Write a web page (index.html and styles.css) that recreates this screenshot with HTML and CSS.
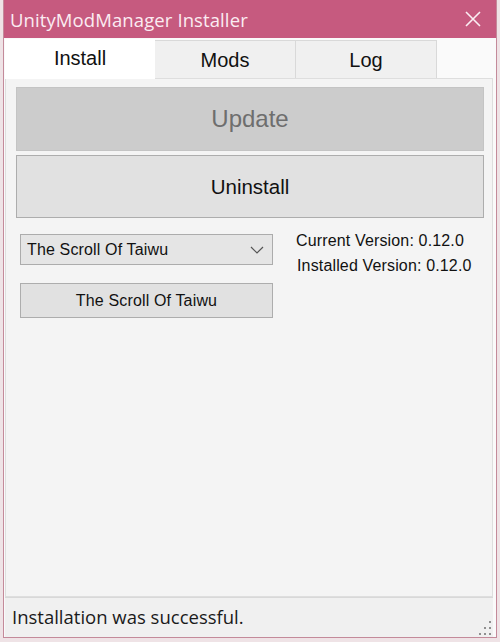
FILE: index.html
```html
<!DOCTYPE html>
<html>
<head>
<meta charset="utf-8">
<link rel="stylesheet" href="styles.css">
</head>
<body>
<div class="window">
  <div class="titlebar">
    <span class="title">UnityModManager Installer</span>
    <svg class="close" width="16" height="16" viewBox="0 0 16 16"><path d="M1 1L15 15M15 1L1 15" stroke="#fbeef3" stroke-width="1.6" fill="none"/></svg>
  </div>
  <div class="client">
    <div class="tabs">
      <div class="tab active">Install</div>
      <div class="tab">Mods</div>
      <div class="tab">Log</div>
    </div>
    <div class="page">
      <div class="bigbtn update">Update</div>
      <div class="bigbtn uninstall">Uninstall</div>
      <div class="row">
        <div class="leftcol">
          <div class="combo">
            <span>The Scroll Of Taiwu</span>
            <svg width="14" height="8" viewBox="0 0 14 8"><path d="M1 1L7 7L13 1" stroke="#555" stroke-width="1.2" fill="none"/></svg>
          </div>
          <div class="smallbtn">The Scroll Of Taiwu</div>
        </div>
        <div class="versions">
          <div>Current Version: 0.12.0</div>
          <div class="inst">Installed Version: 0.12.0</div>
        </div>
      </div>
    </div>
    <div class="status">
      <span>Installation was successful.</span>
      <div class="grip">
        <i class="d1"></i><i class="d2"></i><i class="d3"></i><i class="d4"></i><i class="d5"></i><i class="d6"></i>
      </div>
    </div>
  </div>
</div>
</body>
</html>
```
FILE: styles.css
```css
html, body {
  margin: 0;
  padding: 0;
}
body {
  background: #efe3e6;
  width: 500px;
  height: 642px;
  overflow: hidden;
}
.window {
  margin-left: 3px;
  width: 492px;
  height: 637px;
  border: 1px solid #c48a9a;
  border-top: none;
  display: flex;
  flex-direction: column;
  background: #fafafa;
}
.titlebar {
  height: 38px;
  background: #c65a7f;
  display: flex;
  align-items: center;
  justify-content: space-between;
  padding: 0 15px 0 6px;
  flex-shrink: 0;
}
.title {
  font-family: "Open Sans", "Noto Sans", sans-serif;
  font-size: 18.5px;
  color: #fbecf2;
  letter-spacing: 0.1px;
}
.close {
  display: block;
}
.client {
  flex: 1;
  display: flex;
  flex-direction: column;
  padding: 2px 3px 0 1px;
}
.tabs {
  display: flex;
  height: 38px;
  align-items: flex-end;
  position: relative;
  z-index: 1;
}
.tab {
  font-family: "Liberation Sans", Arial, sans-serif;
  font-size: 20px;
  color: #111;
  width: 141px;
  height: 38px;
  box-sizing: border-box;
  background: #f0f0f0;
  border: 1px solid #d9d9d9;
  border-bottom: none;
  border-left: none;
  display: flex;
  align-items: center;
  justify-content: center;
  padding-top: 2px;
}
.tab.active {
  width: 150px;
  height: 40px;
  background: #ffffff;
  border: none;
  margin-bottom: -1px;
  padding-bottom: 4px;
}
.page {
  height: 519px;
  background: #f4f4f4;
  border: 1px solid #dedede;
  box-sizing: border-box;
  padding: 8px 8px 0 10px;
  display: flex;
  flex-direction: column;
}
.bigbtn {
  font-family: "Liberation Sans", Arial, sans-serif;
  display: flex;
  align-items: center;
  justify-content: center;
  box-sizing: border-box;
}
.update {
  height: 64px;
  background: #cccccc;
  border: 1px solid #c4c4c4;
  color: #6e6e6e;
  font-size: 24px;
}
.uninstall {
  height: 63px;
  margin-top: 4px;
  background: #e1e1e1;
  border: 1px solid #adadad;
  color: #111;
  font-size: 20.5px;
}
.row {
  display: flex;
  margin-top: 10px;
}
.leftcol {
  margin-left: 4px;
  width: 253px;
  padding-top: 6px;
  display: flex;
  flex-direction: column;
}
.combo {
  height: 31px;
  box-sizing: border-box;
  background: #e5e5e5;
  border: 1px solid #acacac;
  display: flex;
  align-items: center;
  justify-content: space-between;
  padding: 0 8px 0 6px;
  font-family: "Liberation Sans", Arial, sans-serif;
  font-size: 16px;
  color: #111;
  letter-spacing: 0.15px;
}
.smallbtn {
  margin-top: 18px;
  height: 35px;
  box-sizing: border-box;
  background: #e1e1e1;
  border: 1px solid #adadad;
  display: flex;
  align-items: center;
  justify-content: center;
  font-family: "Liberation Sans", Arial, sans-serif;
  font-size: 16px;
  color: #111;
  letter-spacing: 0.15px;
}
.versions {
  margin-left: 23px;
  font-family: "Liberation Sans", Arial, sans-serif;
  font-size: 16px;
  color: #111;
  line-height: 25px;
  letter-spacing: 0.15px;
}
.versions .inst {
  margin-left: 1px;
}
.status {
  flex: 1;
  border-top: 1px solid #d8d8d8;
  background: #f0f0f0;
  display: flex;
  align-items: center;
  justify-content: space-between;
  padding-left: 7px;
  position: relative;
}
.status span {
  font-family: "Open Sans", "Noto Sans", sans-serif;
  font-size: 18.5px;
  color: #1a1a1a;
  margin-top: -2px;
}
.grip {
  position: absolute;
  right: 0;
  bottom: 0;
  width: 16px;
  height: 18px;
}
.grip i {
  position: absolute;
  width: 2px;
  height: 2px;
  background: #8f8f8f;
}
.grip .d1 { right: 2px; top: 2px; }
.grip .d2 { right: 2px; top: 8px; }
.grip .d3 { right: 7px; top: 8px; }
.grip .d4 { right: 2px; top: 14px; }
.grip .d5 { right: 7px; top: 14px; }
.grip .d6 { right: 12px; top: 14px; }
```
